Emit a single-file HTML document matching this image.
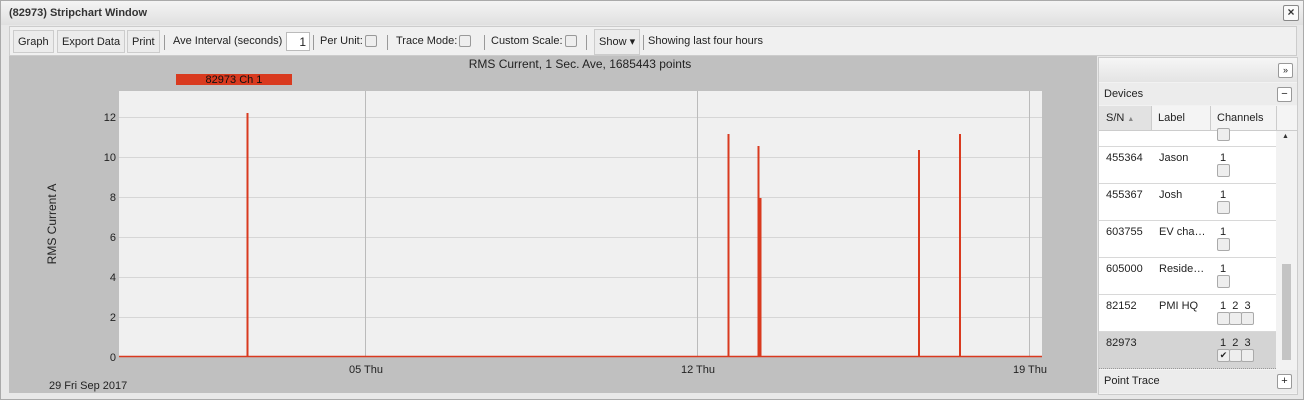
<!DOCTYPE html><html><head><style>
body{margin:0;width:1304px;height:400px;overflow:hidden;font-family:"Liberation Sans",sans-serif;font-size:12px;color:#222;background:#fff}
.win{position:absolute;left:0;top:0;width:1302px;height:398px;border:1px solid #aaa;background:#e8e8e8}
.title{position:absolute;left:0;top:0;width:1302px;height:24px;background:linear-gradient(#f4f4f4,#e0e0e0);font-weight:bold;font-size:11px;line-height:24px;padding-left:8px;box-sizing:border-box;color:#333}
.close{position:absolute;right:4px;top:4px;width:14px;height:14px;border:1px solid #888;border-radius:2px;background:#fafafa;font-size:12px;line-height:13px;text-align:center}
.tb{position:absolute;left:8px;top:25px;width:1288px;height:30px;background:#f0f0f0;border:1px solid #ccc;box-sizing:border-box}
.tb span{position:absolute;top:8px;font-size:11px}
.btn{position:absolute;top:3px;height:23px;border:1px solid #ccc;background:#ececec;box-sizing:border-box;font-size:11px;line-height:22px;padding:0 4px}
.sep{position:absolute;top:8px;width:1px;height:15px;background:#999}
.cb{display:inline-block;width:10px;height:10px;border:1px solid #999;border-radius:2px;background:#eee;vertical-align:-3px;margin-left:2px}
.side{position:absolute;left:1097px;top:56px;width:200px;height:338px;background:#f2f2f2;border:1px solid #ccc;box-sizing:border-box}
.row{position:absolute;left:1098px;width:177px;height:36px;border-bottom:1px solid #d8d8d8;background:#fff;font-size:11px}
.row b{font-weight:normal;position:absolute;top:5px}
.sb{position:absolute;width:11px;height:11px;border:1px solid #aaa;border-radius:2px;background:#eee}
</style></head><body>
<div class="win">
<div class="title">(82973) Stripchart Window<div class="close">×</div></div>
<div class="tb">
<div class="btn" style="left:3px">Graph</div>
<div class="btn" style="left:47px">Export Data</div>
<div class="btn" style="left:117px">Print</div>
<div class="sep" style="left:154px"></div>
<span style="left:163px">Ave Interval (seconds)</span>
<div style="position:absolute;left:276px;top:5px;width:24px;height:19px;background:#fff;border:1px solid #bbb;text-align:right;font-size:12px;line-height:19px;padding-right:3px;box-sizing:border-box">1</div>
<div class="sep" style="left:303px"></div>
<span style="left:310px">Per Unit:<i class="cb"></i></span>
<div class="sep" style="left:377px"></div>
<span style="left:386px">Trace Mode:<i class="cb"></i></span>
<div class="sep" style="left:474px"></div>
<span style="left:481px">Custom Scale:<i class="cb"></i></span>
<div class="sep" style="left:576px"></div>
<div class="btn" style="left:584px;height:26px;top:2px;line-height:24px">Show ▾</div>
<div class="sep" style="left:633px"></div>
<span style="left:638px">Showing last four hours</span>
</div>
<svg style="position:absolute;left:8px;top:55px" width="1088" height="337">
<rect width="1088" height="337" fill="#c0c0c0"/>
<text x="571" y="12" font-size="12" text-anchor="middle" fill="#222">RMS Current, 1 Sec. Ave, 1685443 points</text>
<rect x="167" y="18" width="116" height="11" fill="#d93a1f"/>
<text x="225" y="27" font-size="11" text-anchor="middle" fill="#111">82973 Ch 1</text>
<rect x="110" y="35" width="923" height="266" fill="#f0f0f0"/>
<g stroke="#d6d6d6"><line x1="110" x2="1033" y1="61.5" y2="61.5"/><line x1="110" x2="1033" y1="101.5" y2="101.5"/><line x1="110" x2="1033" y1="141.5" y2="141.5"/><line x1="110" x2="1033" y1="181.5" y2="181.5"/><line x1="110" x2="1033" y1="221.5" y2="221.5"/><line x1="110" x2="1033" y1="261.5" y2="261.5"/></g>
<g stroke="#bbb"><line x1="356.5" x2="356.5" y1="35" y2="301"/><line x1="688.5" x2="688.5" y1="35" y2="301"/><line x1="1020.5" x2="1020.5" y1="35" y2="301"/></g>
<g font-size="11" fill="#222" text-anchor="end"><text x="107" y="65">12</text><text x="107" y="105">10</text><text x="107" y="145">8</text><text x="107" y="185">6</text><text x="107" y="225">4</text><text x="107" y="265">2</text><text x="107" y="305">0</text></g>
<text transform="translate(47,168) rotate(-90)" font-size="12" text-anchor="middle" fill="#222">RMS Current A</text>
<g font-size="11" fill="#222" text-anchor="middle"><text x="357" y="317">05 Thu</text><text x="689" y="317">12 Thu</text><text x="1021" y="317">19 Thu</text></g>
<text x="40" y="333" font-size="11" fill="#222">29 Fri Sep 2017</text>
<g stroke="#d93a1f" stroke-width="2"><line x1="110" x2="1033" y1="300.5" y2="300.5" stroke-width="1.5"/><line x1="238.5" x2="238.5" y1="57" y2="301"/><line x1="719.5" x2="719.5" y1="78" y2="301"/><line x1="749.5" x2="749.5" y1="90" y2="301"/><line x1="751.5" x2="751.5" y1="142" y2="301"/><line x1="910" x2="910" y1="94" y2="301"/><line x1="951" x2="951" y1="78" y2="301"/></g>
</svg>
<div class="side"></div>
<div style="position:absolute;left:1098px;top:57px;width:198px;height:24px;background:linear-gradient(#f6f6f6,#e4e4e4)"></div>
<div style="position:absolute;left:1277px;top:62px;width:13px;height:13px;border:1px solid #999;border-radius:2px;background:#fff;font-size:9px;line-height:12px;text-align:center">»</div>
<div style="position:absolute;left:1098px;top:82px;width:198px;height:22px;background:#ececec;font-size:11px;line-height:22px;padding-left:5px;box-sizing:border-box">Devices</div>
<div style="position:absolute;left:1276px;top:86px;width:13px;height:13px;border:1px solid #999;border-radius:2px;background:#fff;font-size:11px;line-height:12px;text-align:center">−</div>
<div style="position:absolute;left:1098px;top:105px;width:198px;height:24px;background:#f4f4f4;border-bottom:1px solid #ccc;font-size:11px;line-height:24px">
<div style="position:absolute;left:0;width:53px;height:24px;background:#e2e2e2;border-right:1px solid #ccc;padding-left:7px;box-sizing:border-box">S/N <span style="font-size:7px;color:#888">▲</span></div>
<div style="position:absolute;left:59px">Label</div>
<div style="position:absolute;left:111px;width:1px;height:24px;background:#ccc"></div>
<div style="position:absolute;left:118px">Channels</div>
<div style="position:absolute;left:177px;width:1px;height:24px;background:#ccc"></div>
</div>
<div class="row" style="top:130px;height:15px"><div class="sb" style="left:118px;top:-3px"></div></div>
<div class="row" style="top:146px"><b style="left:7px">455364</b><b style="left:60px">Jason</b><b style="left:121px">1</b><div class="sb" style="left:118px;top:17px"></div></div>
<div class="row" style="top:183px"><b style="left:7px">455367</b><b style="left:60px">Josh</b><b style="left:121px">1</b><div class="sb" style="left:118px;top:17px"></div></div>
<div class="row" style="top:220px"><b style="left:7px">603755</b><b style="left:60px">EV cha…</b><b style="left:121px">1</b><div class="sb" style="left:118px;top:17px"></div></div>
<div class="row" style="top:257px"><b style="left:7px">605000</b><b style="left:60px">Reside…</b><b style="left:121px">1</b><div class="sb" style="left:118px;top:17px"></div></div>
<div class="row" style="top:294px"><b style="left:7px">82152</b><b style="left:60px">PMI HQ</b><b style="left:121px">1&nbsp;&nbsp;2&nbsp;&nbsp;3</b><div class="sb" style="left:118px;top:17px"></div><div class="sb" style="left:130px;top:17px"></div><div class="sb" style="left:142px;top:17px"></div></div>
<div class="row" style="top:331px;background:#d4d4d4;border-bottom:1px dotted #999"><b style="left:7px">82973</b><b style="left:121px">1&nbsp;&nbsp;2&nbsp;&nbsp;3</b><div class="sb" style="left:118px;top:17px;font-size:9px;line-height:10px;text-align:center">✔</div><div class="sb" style="left:130px;top:17px"></div><div class="sb" style="left:142px;top:17px"></div></div>
<div style="position:absolute;left:1278px;top:130px;width:14px;height:238px;background:#f2f2f2"></div>
<div style="position:absolute;left:1281px;top:132px;font-size:7px;color:#333">▲</div>
<div style="position:absolute;left:1281px;top:263px;width:9px;height:96px;background:#c4c4c4"></div>
<div style="position:absolute;left:1098px;top:369px;width:198px;height:23px;background:#ececec;font-size:11px;line-height:22px;padding-left:5px;box-sizing:border-box">Point Trace</div>
<div style="position:absolute;left:1276px;top:373px;width:13px;height:13px;border:1px solid #999;border-radius:2px;background:#fff;font-size:11px;line-height:12px;text-align:center">+</div>
</div>
</body></html>
